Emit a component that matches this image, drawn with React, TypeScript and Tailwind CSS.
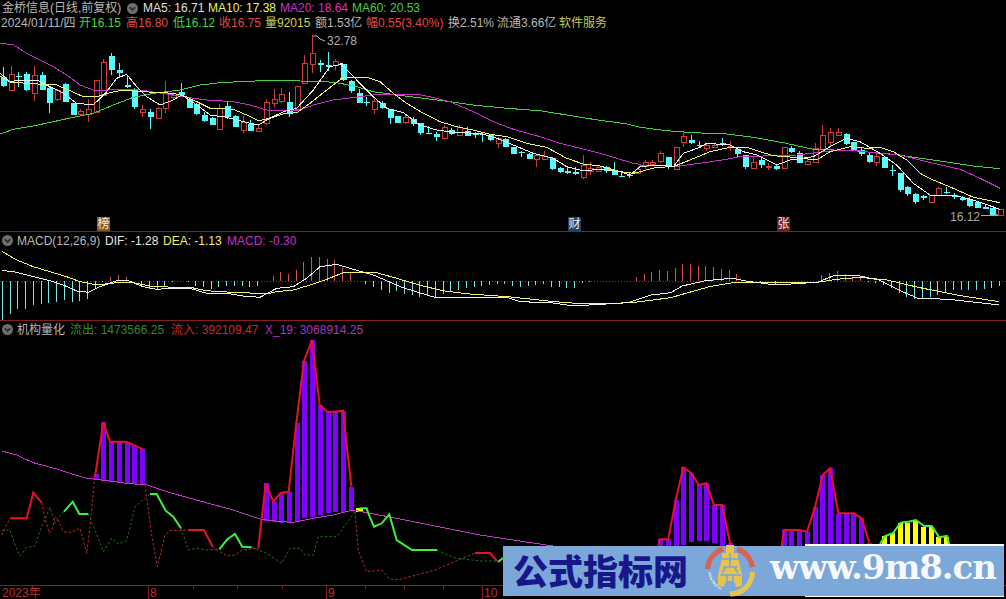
import React from "react";

type P = [number, number];
const z = (ox: number, oy: number, sx: number, pts: P[]) => pts.map(([x, y]) => `${(ox + x / sx).toFixed(1)},${(oy + y / 3).toFixed(1)}`);
const cx = (i: number) => Math.round(3 + 7.73 * i);

// [up, wickTop, bodyTop, bodyBottom, wickBottom] in crop units
type C = [number, number, number, number, number];
const c1: C[] = [[0,82,110,138,140],[1,78,102,150,150],[0,95,107,112,140],[0,97,102,150,152],[1,78,105,158,184],[0,95,105,150,150],[0,140,143,190,218],[1,148,150,178,182],[0,130,132,186,186],[0,188,190,225,225],[1,208,213,222,226],[1,178,207,221,245],[1,120,120,215,215],[1,58,66,165,165],[0,38,48,90,104],[0,70,90,98,114],[0,105,135,140,145],[0,145,148,200,208],[1,195,208,215,232],[0,208,215,232,267],[1,200,205,235,238],[1,124,160,205,220],[1,155,165,172,178],[0,130,155,165,170],[0,170,178,203,203],[0,190,193,222,224],[0,215,224,243,245],[0,230,234,255,256],[1,192,204,266,266],[0,186,198,230,236],[0,225,228,262,262],[1,228,245,270,280],[0,240,252,272,272],[1,255,265,273,275],[1,178,186,248,256],[1,148,178,188,200],[1,145,162,182,190],[0,156,186,218,230],[1,137,137,206,210],[1,45,70,128,128],[1,-15,40,72,100],[0,60,68,76,95],[0,36,76,80,92],[1,58,63,75,90]];
const c2: C[] = [[0,12,12,60,62],[0,60,62,92,100],[0,88,98,130,130],[0,112,125,130,138],[1,110,124,148,162],[0,122,128,145,147],[0,147,147,175,192],[0,167,168,190,190],[1,165,172,186,192],[0,170,178,192,198],[0,188,190,220,224],[0,198,218,220,222],[0,215,223,232,243],[1,195,202,234,234],[0,205,210,222,224],[1,195,201,224,224],[0,202,214,227,228],[0,215,223,226,234],[0,218,223,226,246],[0,222,226,240,242],[1,230,233,248,263],[0,234,236,262,262],[0,262,262,282,282],[0,272,277,280,291],[0,280,282,296,298],[1,284,285,298,320],[1,274,288,296,296],[0,290,294,326,330],[0,320,324,335,338],[0,318,332,338,342],[0,322,336,342,346],[1,284,316,352,358],[1,305,324,332,345],[1,318,320,332,332],[0,318,322,332,338],[0,306,333,344,344],[0,335,347,349,352],[0,340,345,347,354],[1,325,326,340,340]];
const c3: C[] = [[1,150,155,167,177],[1,150,155,163,165],[1,122,130,152,158],[0,142,142,170,176],[1,112,112,177,177],[1,70,78,96,112],[0,74,90,99,102],[0,94,105,108,115],[1,100,104,115,122],[1,98,104,110,114],[0,85,100,106,108],[1,92,107,112,122],[0,117,118,133,140],[0,135,136,172,176],[1,140,157,173,173],[0,145,150,165,174],[1,158,167,172,180],[0,165,168,177,180],[1,112,112,174,174],[0,108,115,125,130],[0,122,130,158,158],[1,145,152,162,166],[1,100,115,155,155],[1,45,75,116,116],[1,55,67,95,108],[1,55,67,76,76],[0,68,73,102,105],[0,95,97,120,124],[0,115,120,133,137],[0,130,135,157,160],[1,130,138,155,168],[0,140,142,173,175],[0,165,180,183,197],[0,188,189,240,245],[0,228,231,252,257],[0,250,252,275,282],[0,255,258,265,270],[1,255,256,275,275],[1,232,233,255,255],[0,232,245,250,253],[0,250,254,260,266],[0,258,264,270,273],[0,262,268,289,290],[0,272,277,294,295],[0,285,292,296,298],[0,294,295,315,318],[1,297,298,316,316]];
const candles = [
  ...c1.map((d, i) => ({ i, d, oy: 40 })),
  ...c2.map((d, i) => ({ i: i + 44, d, oy: 60 })),
  ...c3.map((d, i) => ({ i: i + 83, d, oy: 110 })),
];

const ma20 = [...z(0,40,3,[[0,10],[40,14],[80,40],[120,60],[160,80],[200,105],[240,135],[280,150],[320,150],[380,148],[420,150],[460,156],[520,165],[560,172],[620,180],[700,185],[750,195],[800,210],[860,213],[900,210],[940,195],[1000,180]]),...z(340,60,3,[[60,110],[100,105],[170,103],[230,103],[270,110],[330,125],[400,155],[460,185],[520,208],[600,230],[660,250],[720,265],[780,280],[840,298],[880,310],[900,313]]),...z(640,110,3,[[0,165],[50,165],[100,170],[180,160],[260,148],[300,140],[400,137],[470,135],[530,128],[580,122],[640,120],[700,128],[780,135],[860,155],[960,178],[1020,205],[1080,235]])].join(" ");
const ma60 = [...z(0,40,3,[[0,282],[40,268],[100,258],[160,245],[220,232],[280,220],[340,195],[400,172],[460,160],[540,150],[600,135],[660,128],[740,124],[830,121],[900,123],[980,125]]),...z(340,60,3,[[0,70],[50,80],[100,95],[170,105],[250,115],[330,125],[400,135],[500,145],[600,152],[680,165],[760,178],[860,192]]),...z(640,110,3,[[0,52],[80,62],[160,68],[260,72],[340,82],[430,98],[520,118],[640,122],[760,133],[880,150],[1000,168],[1080,176]])].join(" ");
const ma10 = [...z(0,40,3,[[0,108],[30,126],[80,130],[130,133],[170,135],[210,152],[250,170],[290,170],[330,158],[370,150],[420,155],[470,157],[520,160],[560,170],[600,190],[630,205],[700,208],[740,225],[775,242],[810,235],[850,222],[890,218],[930,190],[980,150],[1020,120]]),...z(340,60,3,[[0,55],[40,52],[80,52],[120,65],[160,100],[200,130],[250,160],[300,185],[350,200],[400,210],[450,223],[500,230],[560,250],[620,262],[680,295],[730,312],[780,318],[840,335],[880,340]]),...z(640,110,3,[[0,185],[50,172],[100,170],[150,150],[210,125],[270,112],[320,112],[360,125],[400,137],[460,142],[530,150],[570,125],[630,110],[680,115],[720,112],[760,125],[800,150],[840,190],[880,210],[940,235],[1000,262],[1080,278]])].join(" ");
const ma5 = [...z(0,40,3,[[0,100],[30,125],[60,120],[110,120],[150,140],[190,160],[230,190],[280,195],[320,155],[350,115],[380,103],[410,140],[440,170],[480,195],[520,180],[545,165],[590,195],[630,225],[680,232],[730,245],[775,255],[810,235],[850,215],[890,205],[940,150],[990,80],[1030,72]]),...z(340,60,3,[[0,10],[50,60],[100,110],[140,145],[190,158],[240,195],[290,210],[350,218],[420,220],[470,235],[520,255],[580,280],[640,295],[680,320],[730,332],[780,328],[840,335],[870,345]]),...z(640,110,3,[[0,170],[50,165],[100,170],[130,130],[180,112],[200,100],[270,105],[310,125],[350,135],[410,165],[450,150],[520,140],[570,110],[620,85],[660,95],[720,130],[770,165],[820,220],[870,255],[940,255],[1000,270],[1080,298]])].join(" ");

const macdBars = [-39,-33,-28,-28,-24,-23,-22,-21,-19,-21,-20,-18,-8,-1,4,6,4,0,-3,-8,-8,-6,-1,0,-1,-5,-6,-8,-6,-5,-5,-5,-6,-5,0,5,9,7,11,19,24,24,22,21,13,9,0,-3,-6,-9,-12,-10,-13,-14,-16,-15,-17,-13,-10,-9,-7,-6,-5,-4,-3,-3,-5,-6,-5,-4,-3,-6,-6,-7,-7,-2,-1,0,0,0,0,0,4,7,9,11,10,13,17,17,15,15,14,12,11,7,1,0,-2,0,-3,0,0,0,0,0,6,8,10,7,4,4,-1,-2,-4,-7,-12,-16,-18,-18,-16,-14,-11,-9,-9,-9,-9,-8,-7,-5];
const dea = [...z(0,210,3,[[6,124],[50,150],[100,170],[150,185],[200,200],[240,215],[290,225],[350,218],[400,218],[450,228],[520,232],[570,232],[620,242],[680,246],[770,250],[800,252],[830,245],[880,240],[930,225],[980,208],[1030,188],[1080,186],[1130,188],[1190,205]]),...z(400,230,2.587,[[0,148],[50,165],[110,182],[180,192],[280,200],[400,215],[480,222],[600,218],[700,203],[800,170],[860,158],[960,158],[1080,157],[1130,148],[1190,142],[1260,150],[1340,172],[1440,195],[1550,215]])].join(" ");
const dif = [...z(0,210,3,[[6,181],[50,187],[100,200],[150,212],[190,225],[230,243],[265,247],[300,230],[350,212],[385,212],[430,230],[470,238],[510,235],[570,235],[620,250],[680,250],[730,258],[780,262],[830,235],[880,230],[920,205],[960,170],[1010,163],[1060,178],[1120,195],[1190,225]]),...z(400,230,2.587,[[0,170],[50,188],[90,202],[280,203],[310,215],[390,218],[450,228],[490,225],[590,218],[650,195],[700,188],[730,168],[790,152],[860,145],[890,152],[970,165],[1080,157],[1120,138],[1180,136],[1240,150],[1300,185],[1340,205],[1420,208],[1530,222],[1550,222]])].join(" ");

// lower panel bars: [index, topY, bottomY]
const bars1: [number, number, number][] = [[12,474,479],[13,422,480],[14,442,481],[15,442,482],[16,442,483],[17,446,484],[18,449,484]];
const g2t = [460,515,488,485,280,92,30,225,245,245,242,470];
const g2b = [572,575,578,578,575,565,560,555,550,547,545,540];
const g3t = [268,268,150,52,68,105,100,165,165,278];
const g3b = [288,288,288,285,275,272,272,278,288,288];
const g4t = [240,243,243,245,172,75,55,192,192,192,205,278];
const g5t = [258,250,218,218,212,230,230,262,262];
const purple = [
  ...bars1,
  ...g2t.map((t, k) => [34 + k, 330 + t / 3, 330 + g2b[k] / 3] as [number, number, number]),
  ...g3t.map((t, k) => [85 + k, 450 + t / 3, 450 + g3b[k] / 3] as [number, number, number]),
  ...g4t.map((t, k) => [101 + k, 450 + t / 3, 546] as [number, number, number]),
];

const mline = [...z(0,420,3,[[5,93],[50,105],[100,128],[170,147],[200,157],[260,175],[320,182],[380,190],[440,195],[500,215],[600,243],[700,270],[780,297],[840,305],[880,307],[940,295],[1000,285],[1060,270],[1110,280],[1190,295]]),"440,527","480,535","513,540","553,546"].join(" ");
const Z4 = (p: P[]) => z(0, 420, 3, p).join(" ");
const Z9 = (p: P[]) => z(640, 450, 3, p).join(" ");
const redThick = [
  Z4([[30,295],[80,295],[100,218],[125,248]]),
  Z4([[565,330],[612,330],[638,380]]),
  Z4([[285,170],[310,8],[330,65],[378,65],[430,88]]),
  Z4([[775,385],[797,190]]) + " " + z(250,330,3,[[70,515],[93,488],[116,485],[139,280],[162,92],[186,30],[209,225],[232,245],[255,245],[279,242],[304,470]]).join(" "),
  Z9([[55,288],[60,268],[85,268],[107,150],[130,52],[153,68],[177,105],[199,100],[222,165],[247,165],[270,278],[276,290]]),
  Z9([[425,288],[432,240],[478,240],[501,245],[525,172],[548,75],[571,55],[595,190],[642,190],[665,205],[688,278]]),
  "475,553 490,553 497,561",
];
const greenThick = [
  Z4([[192,275],[218,245],[238,282],[265,282]]),
  Z4([[450,222],[470,222],[497,272],[520,290],[543,325]]),
  Z4([[658,388],[682,358],[705,342],[727,380],[755,382]]),
  Z4([[1080,265],[1100,265],[1105,280],[1122,320],[1145,310],[1168,283],[1190,360]]) + " 412,550 437,550",
  "498,562 503,558",
  Z9([[720,282],[735,258],[758,250],[782,218],[805,215],[828,210],[852,228],[875,228],[898,262],[921,258],[928,285]]),
];
const redDash = [
  Z4([[5,345],[30,295]]),
  Z4([[125,248],[135,295],[148,340],[158,325],[165,290],[175,300],[190,335],[210,338],[240,325],[260,400],[270,320],[285,165]]),
  Z4([[435,195],[455,345],[472,440],[495,345],[510,332],[565,330]]),
  Z4([[638,380],[680,408],[705,405],[727,390],[772,385]]),
  Z4([[1065,275],[1075,390],[1100,455],[1145,450],[1170,478],[1200,478]]) + " 435,570 475,553",
];
const greenDash = [
  Z4([[5,332],[30,330],[45,375],[60,408],[80,382],[105,378],[125,320],[150,262],[165,310],[185,280],[192,275]]),
  Z4([[265,282],[285,330],[310,395],[335,355],[355,372],[380,362],[405,260],[435,235],[450,222]]),
  Z4([[543,325],[565,390],[590,385],[620,390],[658,388]]),
  Z4([[755,382],[800,400],[845,430],[870,385],[900,385],[915,405],[940,405],[955,350],[1010,350],[1065,275]]),
  "437,550 455,558 480,561 497,561",
];

function Chevron({ className = "" }: { className?: string }) {
  return (
    <svg viewBox="0 0 11 11" className={`h-[11px] w-[11px] shrink-0 ${className}`}>
      <circle cx="5.5" cy="5.5" r="5.5" fill="#6e6e6e" />
      <path d="M2.8 4.2 5.5 7 8.2 4.2" fill="none" stroke="#222" strokeWidth="1.4" />
    </svg>
  );
}

function Badge({ text, className }: { text: string; className: string }) {
  return <span className={`absolute top-[217px] flex h-[14px] w-[13px] items-center justify-center text-[12px] leading-none text-[#f0f0f0] ${className}`}>{text}</span>;
}

export default function App() {
  return (
    <div className="relative flex h-[599px] w-[1006px] flex-col overflow-hidden bg-black font-['Liberation_Sans','Noto_Sans_CJK_SC',sans-serif] text-[12px] leading-[14px] text-[#b8b8b8]">
      {/* Price panel */}
      <section className="relative h-[232px] shrink-0 border-b border-[#861c1c]">
        <svg viewBox="0 0 1006 231" className="absolute inset-0 h-[231px] w-[1006px]">
          {candles.map(({ i, d, oy }) => {
            const x = cx(i) + 0.5;
            const col = d[0] ? "#d03c38" : "#54fcfc";
            const y = (v: number) => Math.round(oy + v / 3);
            const t = y(d[2]);
            const b = Math.max(y(d[3]), t + 1);
            return (
              <g key={i} shapeRendering="crispEdges">
                <line x1={x} x2={x} y1={y(d[1])} y2={y(d[4])} stroke={col} />
                {d[0] ? (
                  <rect x={x - 2.5} y={t + 0.5} width={5} height={b - t} fill="#000" stroke={col} />
                ) : (
                  <rect x={x - 3} y={t} width={6} height={b - t} fill={col} />
                )}
              </g>
            );
          })}
          <g fill="none" shapeRendering="crispEdges">
            <polyline points={ma60} stroke="#46d23c" />
            <polyline points={ma20} stroke="#c832c8" />
            <polyline points={ma10} stroke="#f4f46a" />
            <polyline points={ma5} stroke="#f0f0f0" />
          </g>
          <polyline points="313,36 317,36 320,39 325,41" fill="none" stroke="#b8b8b8" />
          <text x="327" y="45" fill="#b0b0b0" fontSize="12">32.78</text>
          <text x="950" y="221" fill="#a8a8a8" fontSize="12">16.12</text>
          <polyline points="981,215.5 998,215.5 995,213" fill="none" stroke="#a8a8a8" />
        </svg>
        <div className="relative flex h-[16px] items-center whitespace-nowrap pl-[2px]">
          <span className="w-[125px]">金桥信息(日线,前复权)</span>
          <Chevron />
          <span className="ml-[5px] w-[65px] text-[#e0e0e0]">MA5: 16.71</span>
          <span className="w-[72px] text-[#f0f060]">MA10: 17.38</span>
          <span className="w-[72px] text-[#d030d0]">MA20: 18.64</span>
          <span className="text-[#40d040]">MA60: 20.53</span>
        </div>
        <div className="relative flex h-[13px] items-center whitespace-nowrap pl-px">
          <span className="w-[78px]">2024/01/11/四</span>
          <span className="w-[47px] text-[#40d840]">开16.15</span>
          <span className="w-[47px] text-[#e04848]">高16.80</span>
          <span className="w-[46px] text-[#40d840]">低16.12</span>
          <span className="w-[46px] text-[#e04848]">收16.75</span>
          <span className="w-[50px] text-[#d0d050]">量92015</span>
          <span className="w-[51px]">额1.53亿</span>
          <span className="w-[82px] text-[#e04848]">幅0.55(3.40%)</span>
          <span className="w-[49px]">换2.51%</span>
          <span className="w-[62px]">流通3.66亿</span>
          <span className="text-[#c8c850]">软件服务</span>
        </div>
        <Badge text="榜" className="left-[97px] bg-[#8a5a22]" />
        <Badge text="财" className="left-[568px] bg-[#1f4468]" />
        <Badge text="张" className="left-[777px] bg-[#7c1616]" />
      </section>

      {/* MACD panel */}
      <section className="relative h-[89px] shrink-0 border-b border-[#861c1c]">
        <svg viewBox="0 232 1006 88" className="absolute inset-0 h-[88px] w-[1006px]">
          <line x1="0" x2="1006" y1="281.5" y2="281.5" stroke="#a82828" strokeDasharray="1 2" />
          {macdBars.map((h, i) =>
            h === 0 ? null : (
              <line key={i} shapeRendering="crispEdges" x1={cx(i) - 0.5} x2={cx(i) - 0.5} y1={281} y2={281 - h} stroke={h > 0 ? "#d85050" : "#70e8e8"} />
            )
          )}
          <g fill="none" shapeRendering="crispEdges">
            <polyline points={dea} stroke="#f4f46a" />
            <polyline points={dif} stroke="#f0f0f0" />
          </g>
        </svg>
        <div className="relative flex h-[17px] items-center whitespace-nowrap pl-[2px]">
          <Chevron />
          <span className="ml-[4px] w-[88px]">MACD(12,26,9)</span>
          <span className="w-[58px] text-[#e8e8e8]">DIF: -1.28</span>
          <span className="w-[64px] text-[#f0f060]">DEA: -1.13</span>
          <span className="text-[#c830c8]">MACD: -0.30</span>
        </div>
      </section>

      {/* Lower panel */}
      <section className="relative h-[265px] shrink-0 border-b border-[#861c1c]">
        <svg viewBox="0 321 1006 264" className="absolute inset-0 h-[264px] w-[1006px]">
          <g shapeRendering="crispEdges">
            {purple.map(([i, t, b], k) => (
              <rect key={k} x={cx(i) - 2} y={t} width={5.2} height={b - t} fill="#8000ff" />
            ))}
            {g5t.map((t, k) => (
              <rect key={k} x={cx(114 + k) - 2} y={450 + t / 3} width={5.2} height={546 - (450 + t / 3)} fill="#ffff00" />
            ))}
            <rect x="356" y="508" width="7" height="4" fill="#ffff00" />
          </g>
          <polyline points={mline} fill="none" stroke="#c838c8" shapeRendering="crispEdges" />
          {redDash.map((p, k) => (
            <polyline key={k} points={p} fill="none" stroke="#c83232" strokeWidth="0.9" strokeDasharray="2.5 2" />
          ))}
          {greenDash.map((p, k) => (
            <polyline key={k} points={p} fill="none" stroke="#247a24" strokeWidth="0.9" strokeDasharray="2.5 2" />
          ))}
          {greenThick.map((p, k) => (
            <polyline key={k} points={p} fill="none" stroke="#3cf03c" strokeWidth="2" />
          ))}
          {redThick.map((p, k) => (
            <polyline key={k} points={p} fill="none" stroke="#e8102c" strokeWidth="2" />
          ))}
        </svg>
        <div className="relative flex h-[17px] items-center whitespace-nowrap pl-[2px]">
          <Chevron />
          <span className="ml-[4px] w-[53px]">机构量化</span>
          <span className="w-[101px] text-[#2c8c2c]">流出: 1473566.25</span>
          <span className="w-[94px] text-[#c82c2c]">流入: 392109.47</span>
          <span className="text-[#b030c0]">X_19: 3068914.25</span>
        </div>
      </section>

      {/* Time axis */}
      <div className="relative flex h-[13px] items-stretch whitespace-nowrap text-[#b83030]">
        <span className="w-[148px] pl-[2px]">2023年</span>
        <span className="w-[178px] border-l border-[#861c1c] pl-px">8</span>
        <span className="w-[156px] border-l border-[#861c1c] pl-px">9</span>
        <span className="border-l border-[#861c1c] pl-px">10</span>
        <svg viewBox="0 0 1006 3" className="absolute left-0 top-0 h-[3px] w-[1006px]">
          {[193, 237, 282, 365, 404, 443].map((x) => (
            <line key={x} x1={x} x2={x} y1="0" y2="3" stroke="#861c1c" shapeRendering="crispEdges" />
          ))}
        </svg>
      </div>

      {/* Watermark banner */}
      <div className="absolute left-[805px] top-[544px] h-[53px] w-[199px] bg-white" />
      <div className="absolute left-[503px] top-[546px] flex h-[50px] w-[501px] items-center bg-[#7ba7d9]">
        <span className="mb-[4px] ml-[10px] w-[176px] whitespace-nowrap font-['Noto_Sans_CJK_SC',sans-serif] text-[35px] font-black leading-none text-[#17178a]">公式指标网</span>
        <svg viewBox="0 0 50 52" className="ml-[16px] h-[52px] w-[50px] shrink-0">
          <defs>
            <path id="ringText" d="M3.5 27 A 21.5 21.5 0 0 0 22 47" />
          </defs>
          <path d="M2.5 24 A 22.5 22.5 0 0 1 18 4" fill="none" stroke="#d9634e" strokeWidth="5" />
          <path d="M32 4 A 22.5 22.5 0 0 1 47.5 22" fill="none" stroke="#d9634e" strokeWidth="5" />
          <path d="M47.5 27 A 22.5 22.5 0 0 1 25 49" fill="none" stroke="#e8c34e" strokeWidth="5" />
          <text fill="#ffffff" fontSize="4" fontFamily="Liberation Sans"><textPath href="#ringText">www.9m8.cn</textPath></text>
          <path d="M21 0H29V8H33V13L37 30V41L31 42L29 36H21L19 42L13 41V30L17 13V8H21Z" fill="#e8c34e" />
          <path d="M16 14H34M25 8V22M18 22H33M21 22L17 28M29 22L33 28M15 30H36M22 30V41M28 30V41" fill="none" stroke="#7ba7d9" strokeWidth="1.6" />
        </svg>
        <span className="mb-[9px] ml-[15px] whitespace-nowrap font-['DejaVu_Serif',serif] text-[34px] font-bold leading-none tracking-[-1.1px] text-[#f6f8fc]">www.9m8.cn</span>
      </div>
    </div>
  );
}
